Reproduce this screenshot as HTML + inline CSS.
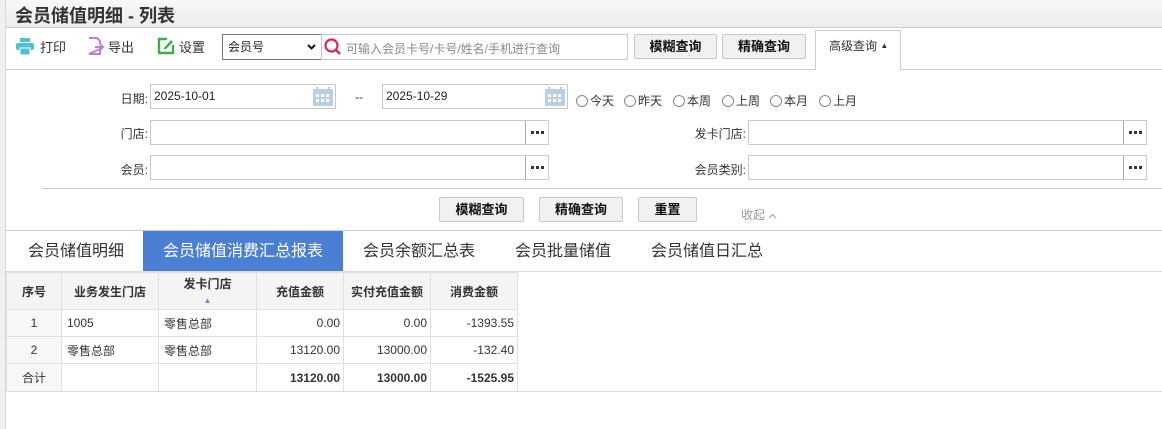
<!DOCTYPE html>
<html><head><meta charset="utf-8"><style>
*{box-sizing:border-box;margin:0;padding:0}
body{width:1162px;height:429px;overflow:hidden;background:#fff;font-family:"Liberation Sans","Noto Sans CJK SC",sans-serif;font-size:12px;color:#333;position:relative}
.a{position:absolute}
.inp{position:absolute;border:1px solid #c8c8c8;background:#fff;height:25px;font-size:12px;line-height:23px;padding-left:3px;color:#222}
.dots{position:absolute;right:0;top:0;width:23px;height:23px;border-left:1px solid #aaa}
.dots svg{position:absolute;left:5px;top:10px}
.btn{position:absolute;border:1px solid #c8c8c8;background:#f1f1f1;border-radius:2px;font-weight:bold;font-size:13px;color:#111;text-align:center;height:25px;line-height:23px}
.lbl{position:absolute;font-size:12px;color:#333;text-align:right}
.rad{position:absolute;top:92px;font-size:12px}
.rad i{display:inline-block;width:12px;height:12px;border:1px solid #888;border-radius:50%;vertical-align:-2px;margin-right:2px}
table{border-collapse:collapse;position:absolute;left:6px;top:272px;font-size:12px}
td,th{border:1px solid #e0e0e0;height:27px}
th{background:#f4f4f4;font-weight:bold;color:#333;height:37px}
td.n{text-align:right;padding-right:3px}
.tab{position:absolute;top:231px;height:41px;line-height:41px;font-size:16px;color:#333}
</style></head><body>
<div class="a" style="left:0;top:0;width:6px;height:429px;background:#eef0f3;border-right:1px solid #d8d8d8"></div>
<div class="a" style="left:6px;top:0;width:1156px;height:28px;background:linear-gradient(#f8f8f8,#ececec);border-bottom:1px solid #ccc"></div>
<div class="a" style="left:15px;top:2px;font-size:18px;font-weight:bold;color:#333">会员储值明细 - 列表</div>
<div class="a" style="left:6px;top:69px;width:1156px;height:1px;background:#ccc"></div>
<svg class="a" style="left:16px;top:38px" width="18" height="17" viewBox="0 0 18 17"><rect x="4" y="0" width="10" height="4" fill="#4fc0cc"/><rect x="0" y="5" width="18" height="7" rx="2" fill="#4fc0cc"/><rect x="4" y="10" width="10" height="7" fill="#4fc0cc" stroke="#fff" stroke-width="1"/></svg>
<div class="a" style="left:40px;top:37px;font-size:13px">打印</div>
<svg class="a" style="left:88px;top:37px" width="16" height="18" viewBox="0 0 16 18"><path d="M1 1H9L12 4V7M12 12V17H1Z" fill="none" stroke="#c879d8" stroke-width="2"/><path d="M7 10H15M12 7L15 10L12 13" fill="none" stroke="#c879d8" stroke-width="2"/></svg>
<div class="a" style="left:108px;top:37px;font-size:13px">导出</div>
<svg class="a" style="left:157px;top:37px" width="18" height="18" viewBox="0 0 18 18"><path d="M10 2H2V16H16V8" fill="none" stroke="#3fae4a" stroke-width="2.4"/><path d="M7 11L14 3L16 5L9 12H7Z" fill="#3fae4a"/></svg>
<div class="a" style="left:179px;top:37px;font-size:13px">设置</div>
<div class="a" style="left:222px;top:34px;width:100px;height:26px;border:1px solid #777;background:#fff;line-height:24px;padding-left:5px;font-size:12px;color:#222">会员号<svg style="position:absolute;right:5px;top:9px" width="9" height="6" viewBox="0 0 9 6"><path d="M1 1L4.5 4.5L8 1" fill="none" stroke="#111" stroke-width="2"/></svg></div>
<div class="a" style="left:321px;top:34px;width:307px;height:26px;border:1px solid #c8c8c8;background:#fff"></div>
<svg class="a" style="left:324px;top:38px" width="18" height="18" viewBox="0 0 18 18"><circle cx="7.5" cy="7.5" r="6" fill="none" stroke="#e0206a" stroke-width="2.2"/><path d="M12 12L16 16" stroke="#e0206a" stroke-width="2.5"/></svg>
<div class="a" style="left:346px;top:40px;font-size:12px;color:#888">可输入会员卡号/卡号/姓名/手机进行查询</div>
<div class="btn" style="left:634px;top:34px;width:83px">模糊查询</div>
<div class="btn" style="left:722px;top:34px;width:84px">精确查询</div>
<div class="a" style="left:815px;top:30px;width:86px;height:40px;border:1px solid #ccc;border-bottom:none;background:#fff;font-size:12px;line-height:30px;padding-left:13px;color:#333">高级查询 <span style="font-size:8px;vertical-align:2px">&#9650;</span></div>
<div class="lbl" style="left:100px;top:90px;width:48px">日期:</div>
<div class="inp" style="left:150px;top:84px;width:186px">2025-10-01</div>
<svg class="a" style="left:313px;top:87px" width="20" height="19" viewBox="0 0 20 19"><rect x="0" y="2" width="20" height="17" fill="#b8cfe4"/><rect x="3" y="0" width="2" height="4" fill="#b8cfe4"/><rect x="15" y="0" width="2" height="4" fill="#b8cfe4"/><g fill="#fff"><rect x="3" y="7" width="3" height="3"/><rect x="8" y="7" width="3" height="3"/><rect x="13" y="7" width="3" height="3"/><rect x="3" y="12" width="3" height="3"/><rect x="8" y="12" width="3" height="3"/><rect x="13" y="12" width="3" height="3"/></g></svg>
<div class="a" style="left:355px;top:90px">--</div>
<div class="inp" style="left:382px;top:84px;width:186px">2025-10-29</div>
<svg class="a" style="left:545px;top:87px" width="20" height="19" viewBox="0 0 20 19"><rect x="0" y="2" width="20" height="17" fill="#b8cfe4"/><rect x="3" y="0" width="2" height="4" fill="#b8cfe4"/><rect x="15" y="0" width="2" height="4" fill="#b8cfe4"/><g fill="#fff"><rect x="3" y="7" width="3" height="3"/><rect x="8" y="7" width="3" height="3"/><rect x="13" y="7" width="3" height="3"/><rect x="3" y="12" width="3" height="3"/><rect x="8" y="12" width="3" height="3"/><rect x="13" y="12" width="3" height="3"/></g></svg>
<div class="rad" style="left:576px"><i></i>今天</div>
<div class="rad" style="left:624px"><i></i>昨天</div>
<div class="rad" style="left:673px"><i></i>本周</div>
<div class="rad" style="left:722px"><i></i>上周</div>
<div class="rad" style="left:770px"><i></i>本月</div>
<div class="rad" style="left:819px"><i></i>上月</div>
<div class="lbl" style="left:100px;top:125px;width:48px">门店:</div>
<div class="inp" style="left:150px;top:120px;width:399px"><div class="dots"><svg width="13" height="3"><rect x="0" width="3" height="3" fill="#333"/><rect x="5" width="3" height="3" fill="#333"/><rect x="10" width="3" height="3" fill="#333"/></svg></div></div>
<div class="lbl" style="left:660px;top:125px;width:86px">发卡门店:</div>
<div class="inp" style="left:748px;top:120px;width:399px"><div class="dots"><svg width="13" height="3"><rect x="0" width="3" height="3" fill="#333"/><rect x="5" width="3" height="3" fill="#333"/><rect x="10" width="3" height="3" fill="#333"/></svg></div></div>
<div class="lbl" style="left:100px;top:161px;width:48px">会员:</div>
<div class="inp" style="left:150px;top:155px;width:399px"><div class="dots"><svg width="13" height="3"><rect x="0" width="3" height="3" fill="#333"/><rect x="5" width="3" height="3" fill="#333"/><rect x="10" width="3" height="3" fill="#333"/></svg></div></div>
<div class="lbl" style="left:660px;top:161px;width:86px">会员类别:</div>
<div class="inp" style="left:748px;top:155px;width:399px"><div class="dots"><svg width="13" height="3"><rect x="0" width="3" height="3" fill="#333"/><rect x="5" width="3" height="3" fill="#333"/><rect x="10" width="3" height="3" fill="#333"/></svg></div></div>
<div class="a" style="left:42px;top:188px;width:1120px;height:1px;background:#ccc"></div>
<div class="btn" style="left:439px;top:197px;width:85px">模糊查询</div>
<div class="btn" style="left:539px;top:197px;width:84px">精确查询</div>
<div class="btn" style="left:638px;top:197px;width:59px">重置</div>
<div class="a" style="left:741px;top:206px;color:#999;font-size:12px">收起 <svg width="9" height="6" viewBox="0 0 9 6"><path d="M1 5L4.5 1.5L8 5" fill="none" stroke="#aaa" stroke-width="1.2"/></svg></div>
<div class="a" style="left:6px;top:230px;width:1156px;height:1px;background:#ccc"></div>
<div class="tab" style="left:28px">会员储值明细</div>
<div class="tab" style="left:143px;width:200px;background:#4a7fd4;color:#fff;text-align:center">会员储值消费汇总报表</div>
<div class="tab" style="left:363px">会员余额汇总表</div>
<div class="tab" style="left:515px">会员批量储值</div>
<div class="tab" style="left:651px">会员储值日汇总</div>
<div class="a" style="left:6px;top:271px;width:1156px;height:1px;background:#ddd"></div>
<table>
<tr><th style="width:55px;font-weight:bold">序号</th><th style="width:97px">业务发生门店</th><th style="width:98px;vertical-align:top;padding-top:2px">发卡门店<br><span style="color:#5b8fd6;font-size:8px">&#9650;</span></th><th style="width:87px">充值金额</th><th style="width:87px">实付充值金额</th><th style="width:87px">消费金额</th></tr>
<tr><td style="text-align:center;background:#f7f7f7">1</td><td style="padding-left:5px">1005</td><td style="padding-left:5px">零售总部</td><td class="n">0.00</td><td class="n">0.00</td><td class="n">-1393.55</td></tr>
<tr><td style="text-align:center;background:#f7f7f7">2</td><td style="padding-left:5px">零售总部</td><td style="padding-left:5px">零售总部</td><td class="n">13120.00</td><td class="n">13000.00</td><td class="n">-132.40</td></tr>
<tr><td style="text-align:center;background:#f7f7f7;height:28px">合计</td><td></td><td></td><td class="n"><b>13120.00</b></td><td class="n"><b>13000.00</b></td><td class="n"><b>-1525.95</b></td></tr>
</table>
<div class="a" style="left:6px;top:391px;width:1156px;height:1px;background:#ddd"></div>
</body></html>
